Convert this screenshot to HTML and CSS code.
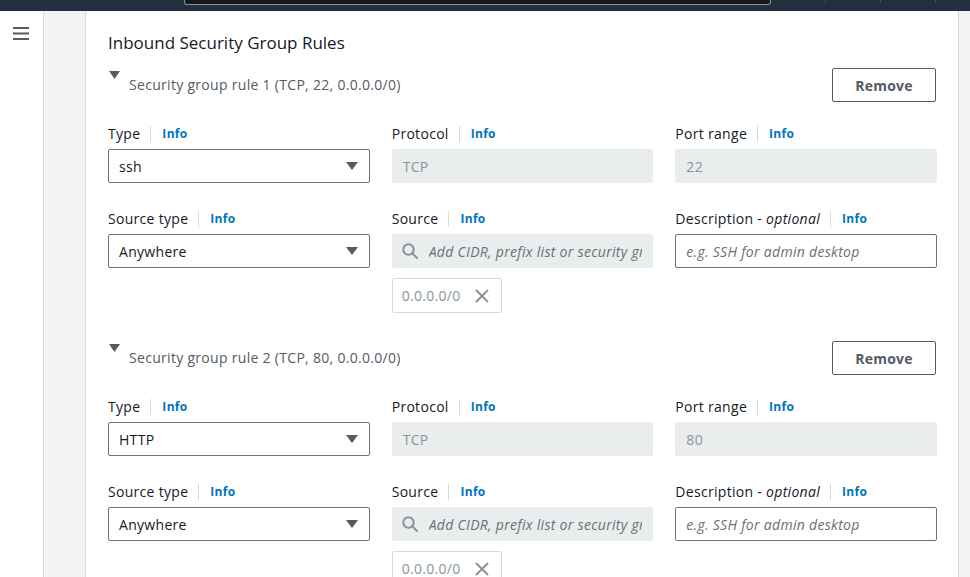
FILE: index.html
```html
<!DOCTYPE html>
<html lang="en">
<head>
<meta charset="utf-8">
<title>Inbound Security Group Rules</title>
<link rel="stylesheet" href="styles.css">
</head>
<body>
<header class="topbar">
  <div class="topbar-search"></div>
  <div class="topbar-seps"><span class="sep"></span><span class="sep"></span><span class="sep"></span></div>
</header>
<div class="layout">
  <nav class="sidenav">
    <svg class="hamburger" width="16" height="14" viewBox="0 0 16 14"><path d="M0 1H16M0 6.5H16M0 12H16" stroke="#545b64" stroke-width="2"/></svg>
  </nav>
  <div class="gutter"></div>
  <main class="panel">
    <h2 class="heading">Inbound Security Group Rules</h2>

    <section class="rule">
      <div class="rule-head">
        <div class="rule-title">
          <svg class="expander" width="11" height="8" viewBox="0 0 11 8"><path d="M0 0H11L5.5 8Z" fill="#545b64"/></svg>
          <span class="rule-name">Security group rule 1 (TCP, 22, 0.0.0.0/0)</span>
        </div>
        <button class="btn">Remove</button>
      </div>
      <div class="fields">
        <div class="field">
          <div class="field-label"><span>Type</span><span class="label-sep"></span><span class="info">Info</span></div>
          <div class="control select"><span>ssh</span><svg width="12" height="8" viewBox="0 0 12 8"><path d="M0 0H12L6 8Z" fill="#545b64"/></svg></div>
        </div>
        <div class="field">
          <div class="field-label"><span>Protocol</span><span class="label-sep"></span><span class="info">Info</span></div>
          <div class="control disabled">TCP</div>
        </div>
        <div class="field">
          <div class="field-label"><span>Port range</span><span class="label-sep"></span><span class="info">Info</span></div>
          <div class="control disabled">22</div>
        </div>
        <div class="field">
          <div class="field-label"><span>Source type</span><span class="label-sep"></span><span class="info">Info</span></div>
          <div class="control select"><span>Anywhere</span><svg width="12" height="8" viewBox="0 0 12 8"><path d="M0 0H12L6 8Z" fill="#545b64"/></svg></div>
        </div>
        <div class="field">
          <div class="field-label"><span>Source</span><span class="label-sep"></span><span class="info">Info</span></div>
          <div class="control search">
            <svg class="search-icon" width="16" height="16" viewBox="0 0 16 16"><circle cx="6.5" cy="6.5" r="5.2" fill="none" stroke="#879596" stroke-width="2"/><path d="M10.3 10.3L15 15" stroke="#879596" stroke-width="2" stroke-linecap="round"/></svg>
            <span class="placeholder">Add CIDR, prefix list or security group</span>
          </div>
          <div class="chip"><span>0.0.0.0/0</span><svg width="14" height="14" viewBox="0 0 14 14"><path d="M1 1L13 13M13 1L1 13" stroke="#879596" stroke-width="2"/></svg></div>
        </div>
        <div class="field">
          <div class="field-label"><span>Description - <em>optional</em></span><span class="label-sep"></span><span class="info">Info</span></div>
          <div class="control"><span class="placeholder">e.g. SSH for admin desktop</span></div>
        </div>
      </div>
    </section>

    <section class="rule rule-next">
      <div class="rule-head">
        <div class="rule-title">
          <svg class="expander" width="11" height="8" viewBox="0 0 11 8"><path d="M0 0H11L5.5 8Z" fill="#545b64"/></svg>
          <span class="rule-name">Security group rule 2 (TCP, 80, 0.0.0.0/0)</span>
        </div>
        <button class="btn">Remove</button>
      </div>
      <div class="fields">
        <div class="field">
          <div class="field-label"><span>Type</span><span class="label-sep"></span><span class="info">Info</span></div>
          <div class="control select"><span>HTTP</span><svg width="12" height="8" viewBox="0 0 12 8"><path d="M0 0H12L6 8Z" fill="#545b64"/></svg></div>
        </div>
        <div class="field">
          <div class="field-label"><span>Protocol</span><span class="label-sep"></span><span class="info">Info</span></div>
          <div class="control disabled">TCP</div>
        </div>
        <div class="field">
          <div class="field-label"><span>Port range</span><span class="label-sep"></span><span class="info">Info</span></div>
          <div class="control disabled">80</div>
        </div>
        <div class="field">
          <div class="field-label"><span>Source type</span><span class="label-sep"></span><span class="info">Info</span></div>
          <div class="control select"><span>Anywhere</span><svg width="12" height="8" viewBox="0 0 12 8"><path d="M0 0H12L6 8Z" fill="#545b64"/></svg></div>
        </div>
        <div class="field">
          <div class="field-label"><span>Source</span><span class="label-sep"></span><span class="info">Info</span></div>
          <div class="control search">
            <svg class="search-icon" width="16" height="16" viewBox="0 0 16 16"><circle cx="6.5" cy="6.5" r="5.2" fill="none" stroke="#879596" stroke-width="2"/><path d="M10.3 10.3L15 15" stroke="#879596" stroke-width="2" stroke-linecap="round"/></svg>
            <span class="placeholder">Add CIDR, prefix list or security group</span>
          </div>
          <div class="chip"><span>0.0.0.0/0</span><svg width="14" height="14" viewBox="0 0 14 14"><path d="M1 1L13 13M13 1L1 13" stroke="#879596" stroke-width="2"/></svg></div>
        </div>
        <div class="field">
          <div class="field-label"><span>Description - <em>optional</em></span><span class="label-sep"></span><span class="info">Info</span></div>
          <div class="control"><span class="placeholder">e.g. SSH for admin desktop</span></div>
        </div>
      </div>
    </section>
  </main>
  <div class="rgutter"></div>
</div>
</body>
</html>
```

FILE: styles.css
```css
* { box-sizing: border-box; }
html, body { height: 100%; }
body {
  margin: 0;
  font-family: "Open Sans", "Noto Sans", sans-serif;
  font-size: 14px;
  letter-spacing: 0.3px;
  color: #16191f;
  overflow: hidden;
  background: #fff;
}
.topbar {
  height: 11px;
  background: #232f3e;
  display: flex;
  align-items: flex-start;
}
.topbar-search {
  margin-left: 184px;
  width: 587px;
  height: 5px;
  background: #16191f;
  border: 1px solid #879596;
  border-top: 0;
  border-radius: 0 0 3px 3px;
}
.topbar-seps {
  display: flex;
  gap: 54px;
  margin-left: 54px;
}
.sep {
  width: 1px;
  height: 3px;
  background: #4a5564;
}
.layout {
  display: flex;
  height: 566px;
}
.sidenav {
  width: 44px;
  flex: none;
  border-right: 1px solid #d5dbdb;
  padding: 16px 0 0 13px;
}
.hamburger { display: block; }
.gutter {
  width: 42px;
  flex: none;
  background: #f2f3f3;
  border-right: 1px solid #d5dbdb;
}
.rgutter {
  width: 11px;
  flex: none;
  background: #f2f3f3;
}
.panel {
  flex: 1;
  min-width: 0;
  border-right: 1px solid #d5dbdb;
  padding: 21px 21px 0 22px;
  overflow: hidden;
}
.heading {
  margin: 0;
  font-size: 17px;
  font-weight: 400;
  letter-spacing: 0;
  line-height: 22px;
}
.rule-head {
  display: flex;
  justify-content: space-between;
  align-items: flex-start;
  margin-top: 14px;
}
.rule-next .rule-head { margin-top: 28px; }
.rule-title {
  display: flex;
  align-items: flex-start;
}
.expander {
  margin: 3px 9px 0 1px;
  display: block;
}
.rule-name {
  margin-top: 7px;
  line-height: 20px;
  color: #545b64;
}
.btn {
  width: 104px;
  height: 34px;
  margin-right: 1px;
  border: 1px solid #545b64;
  border-radius: 2px;
  background: #fff;
  font-family: inherit;
  font-size: 14px;
  font-weight: 700;
  letter-spacing: 0.2px;
  color: #545b64;
  padding: 0;
}
.fields {
  margin-top: 21px;
  display: grid;
  grid-template-columns: repeat(3, 1fr);
  column-gap: 22px;
  row-gap: 25px;
}
.field { min-width: 0; }
.field-label {
  display: flex;
  align-items: center;
  height: 20px;
  line-height: 20px;
  margin-top: 1px;
  margin-bottom: 5px;
  white-space: nowrap;
}
.label-sep {
  width: 1px;
  height: 16px;
  background: #d5dbdb;
  margin: 0 11px 0 10px;
}
.info {
  font-size: 12px;
  font-weight: 700;
  color: #0073bb;
}
.control {
  height: 34px;
  border: 1px solid #687078;
  border-radius: 2px;
  display: flex;
  align-items: center;
  padding: 0 10px;
  white-space: nowrap;
  overflow: hidden;
}
.select {
  justify-content: space-between;
  padding-right: 11px;
}
.disabled {
  background: #eaeded;
  border-color: #eaeded;
  color: #879596;
}
.search {
  background: #eaeded;
  border-color: #eaeded;
  padding-left: 9px;
}
.search-icon {
  flex: none;
  margin-right: 11px;
}
.placeholder {
  font-style: italic;
  color: #687078;
  overflow: hidden;
}
.chip {
  margin-top: 10px;
  width: 110px;
  height: 35px;
  border: 1px solid #d5dbdb;
  border-radius: 2px;
  display: flex;
  align-items: center;
  gap: 14px;
  padding-left: 9px;
  color: #879596;
}
```
